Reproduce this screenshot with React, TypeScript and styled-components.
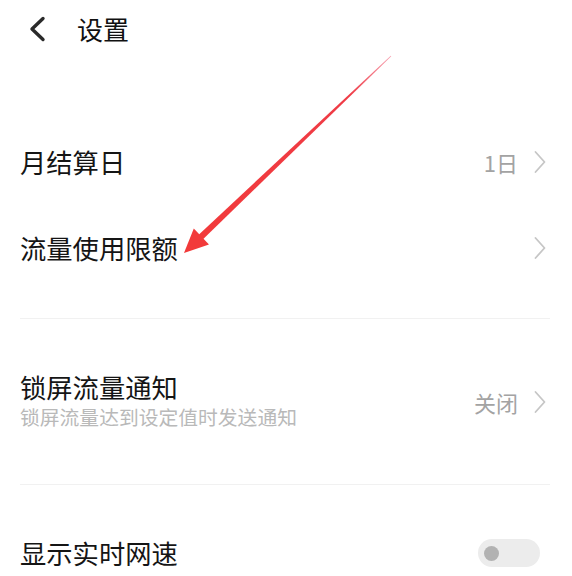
import React from "react";
import styled, { createGlobalStyle } from "styled-components";

const Global = createGlobalStyle`
  html, body { margin: 0; padding: 0; background: #ffffff; }
  body { font-family: "Noto Sans CJK SC", "Noto Sans", sans-serif; }
`;

const Page = styled.div`
  position: relative;
  width: 572px;
  height: 576px;
  overflow: hidden;
  background: #fff;
`;

const Header = styled.div`
  height: 58px;
  display: flex;
  align-items: center;
  padding-left: 27px;
  gap: 30px;
`;

const Title = styled.div`
  font-size: 26px;
  color: #111;
  line-height: 1;
`;

const Section = styled.div<{ $top: number; $bottom: number }>`
  padding: ${(p) => p.$top}px 20px ${(p) => p.$bottom}px;
  display: flex;
  flex-direction: column;
`;

const Divider = styled.div`
  height: 1px;
  margin: 0 22px 0 20px;
  background: #f1f1f1;
`;

const Row = styled.div<{ $h: number }>`
  height: ${(p) => p.$h}px;
  display: flex;
  align-items: center;
  justify-content: space-between;
`;

const TextBlock = styled.div`
  display: flex;
  flex-direction: column;
`;

const Label = styled.div`
  font-size: 26.3px;
  line-height: 32px;
  color: #151515;
`;

const BlockLabel = styled(Label)`
  line-height: 30px;
`;

const Sub = styled.div`
  font-size: 19.8px;
  line-height: 30px;
  color: #b9b9b9;
`;

const Right = styled.div`
  display: flex;
  align-items: center;
  gap: 16px;
  padding-right: 6px;
`;

const Value = styled.div`
  font-size: 22px;
  color: #a3a3a3;
  line-height: 1;
`;

const Toggle = styled.div`
  width: 62px;
  height: 28px;
  border-radius: 14px;
  background: #ececec;
  display: flex;
  align-items: center;
  padding-left: 6px;
  box-sizing: border-box;
  margin-right: 12px;
`;

const Knob = styled.div`
  width: 15px;
  height: 15px;
  border-radius: 50%;
  background: #b2b2b2;
`;

const Overlay = styled.svg`
  position: absolute;
  left: 0;
  top: 0;
  pointer-events: none;
`;

const Chevron = () => (
  <svg width="12" height="24" viewBox="0 0 12 24">
    <path d="M1.5 2 L10.5 12 L1.5 22" fill="none" stroke="#c6c6c6" strokeWidth="1.8" strokeLinecap="round" strokeLinejoin="round" />
  </svg>
);

const Back = () => (
  <svg width="20" height="26" viewBox="0 0 20 26">
    <path d="M16 2.5 L5 13 L16 23.5" fill="none" stroke="#2a2a2a" strokeWidth="3.4" strokeLinecap="round" strokeLinejoin="round" />
  </svg>
);

function Arrow() {
  const tip = [184, 253];
  const tail = [391, 56];
  const dx = tail[0] - tip[0];
  const dy = tail[1] - tip[1];
  const len = Math.hypot(dx, dy);
  const u = [dx / len, dy / len];
  const p = [-u[1], u[0]];
  const headLen = 24;
  const base = [tip[0] + u[0] * headLen, tip[1] + u[1] * headLen];
  const hw = 11;
  const sw = 3.2;
  const pt = (c: number[], k: number) => `${c[0] + p[0] * k},${c[1] + p[1] * k}`;
  const shaftBase = [tip[0] + u[0] * (headLen - 4), tip[1] + u[1] * (headLen - 4)];
  return (
    <Overlay width="572" height="576" viewBox="0 0 572 576">
      <defs>
        <linearGradient id="g" x1={tip[0]} y1={tip[1]} x2={tail[0]} y2={tail[1]} gradientUnits="userSpaceOnUse">
          <stop offset="0" stopColor="#f23a3a" />
          <stop offset="0.8" stopColor="#ef3b46" />
          <stop offset="1" stopColor="#f7a0b0" />
        </linearGradient>
      </defs>
      <polygon
        points={`${pt(shaftBase, sw)} ${pt(tail, 0.4)} ${pt(tail, -0.4)} ${pt(shaftBase, -sw)}`}
        fill="url(#g)"
      />
      <polygon points={`${tip[0]},${tip[1]} ${pt(base, hw)} ${pt(base, -hw)}`} fill="#f23a3a" />
    </Overlay>
  );
}

export default function App() {
  return (
    <>
      <Global />
      <Page>
        <Header>
          <Back />
          <Title>设置</Title>
        </Header>
        <Section $top={61} $bottom={27}>
          <Row $h={86}>
            <Label>月结算日</Label>
            <Right>
              <Value>1日</Value>
              <Chevron />
            </Right>
          </Row>
          <Row $h={86}>
            <Label>流量使用限额</Label>
            <Right>
              <Chevron />
            </Right>
          </Row>
        </Section>
        <Divider />
        <Section $top={0} $bottom={0}>
          <Row $h={165}>
            <TextBlock>
              <BlockLabel>锁屏流量通知</BlockLabel>
              <Sub>锁屏流量达到设定值时发送通知</Sub>
            </TextBlock>
            <Right>
              <Value>关闭</Value>
              <Chevron />
            </Right>
          </Row>
        </Section>
        <Divider />
        <Section $top={25} $bottom={0}>
          <Row $h={86}>
            <Label>显示实时网速</Label>
            <Toggle>
              <Knob />
            </Toggle>
          </Row>
        </Section>
        <Arrow />
      </Page>
    </>
  );
}
